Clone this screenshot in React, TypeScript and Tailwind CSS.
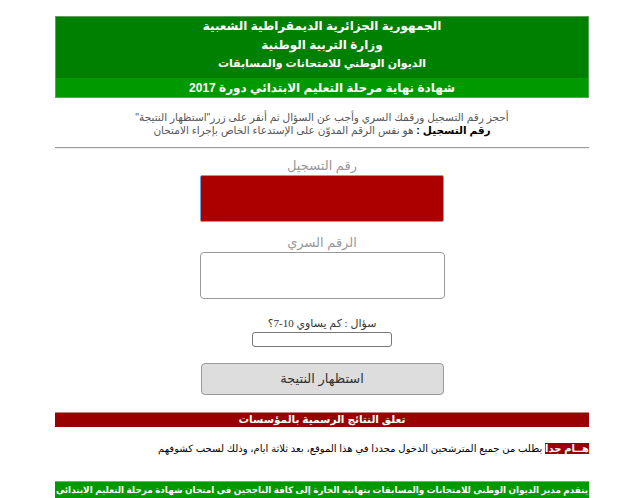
import React from "react";

export default function App() {
  const ar = { fontFamily: '"Liberation Sans", "DejaVu Sans", sans-serif' };
  return (
    <div dir="rtl" className="bg-white w-[640px] h-[498px] overflow-hidden" style={ar}>
      <div className="pt-[16px] mr-[51px] w-[534px]">
        <div className="border border-[#5f9f5f]">
          <div className="bg-[#008000] h-[61px] flex flex-col items-center pt-[0px] text-white font-bold leading-[18.5px]">
            <div className="text-[12px]">الجمهورية الجزائرية الديمقراطية الشعبية</div>
            <div className="text-[12px]">وزارة التربية الوطنية</div>
            <div className="text-[11px]">الديوان الوطني للامتحانات والمسابقات</div>
          </div>
          <div className="bg-[#009900] h-[19px] flex items-center justify-center text-white font-bold text-[12px]">
            شهادة نهاية مرحلة التعليم الابتدائي دورة 2017
          </div>
        </div>

        <div className="mt-[13px] text-center text-[10.5px] leading-[13px] text-[#555]">
          <div>أحجز رقم التسجيل ورقمك السري وأجب عن السؤال ثم أنقر على زرر"استظهار النتيجة"</div>
          <div>
            <span className="font-bold text-black">رقم التسجيل :</span> هو نفس الرقم المدوّن على الإستدعاء الخاص بإجراء الامتحان
          </div>
        </div>

        <div className="mt-[10px] h-[2px] border-t border-[#999] border-b border-b-[#eee]"></div>

        <div className="flex flex-col items-center">
          <div className="mt-[9px] text-[13px] leading-[15px] text-[#999]">رقم التسجيل</div>
          <div className="mt-[2px] w-[244px] h-[47px] bg-[#aa0000] border border-[#7a9fe0] rounded-[2px]"></div>
          <div className="mt-[13px] text-[13px] leading-[15px] text-[#999]">الرقم السري</div>
          <div className="mt-[2px] w-[245px] h-[47px] bg-white border border-[#999] rounded-[4px]"></div>
          <div className="mt-[16px] text-[11px] leading-[16px] text-[#333]" style={{ fontFamily: '"Liberation Serif", "DejaVu Sans", serif' }}>سؤال : كم يساوي 10-7؟</div>
          <div className="mt-[1px] w-[140px] h-[15px] bg-white border border-[#777] rounded-[3px]"></div>
          <div className="mt-[16px] w-[243px] h-[32px] bg-[#dddddd] border border-[#999] rounded-[4px] flex items-center justify-center text-[13px] text-[#333]">
            استظهار النتيجة
          </div>
        </div>

        <div className="mt-[17px] bg-[#990000] border-t border-[#c08080] h-[15px] flex items-center justify-center text-white font-bold text-[10.5px]">
          تعلق النتائج الرسمية بالمؤسسات
        </div>

        <div className="mt-[15px] text-[10px] leading-[13px] text-black">
          <span className="bg-[#990000] text-white font-bold">هــام جدا</span> يطلب من جميع المترشحين الدخول مجددا في هذا الموقع، بعد ثلاثة ايام، وذلك لسحب كشوفهم
        </div>

        <div className="mt-[26px] bg-[#009900] border-t border-[#5fbf5f] h-[18px] flex items-center justify-center text-white font-bold text-[8.8px] whitespace-nowrap">
          يتقدم مدير الديوان الوطني للامتحانات والمسابقات بتهانيه الحارة إلى كافة الناجحين في امتحان شهادة مرحلة التعليم الابتدائي
        </div>
      </div>
    </div>
  );
}
